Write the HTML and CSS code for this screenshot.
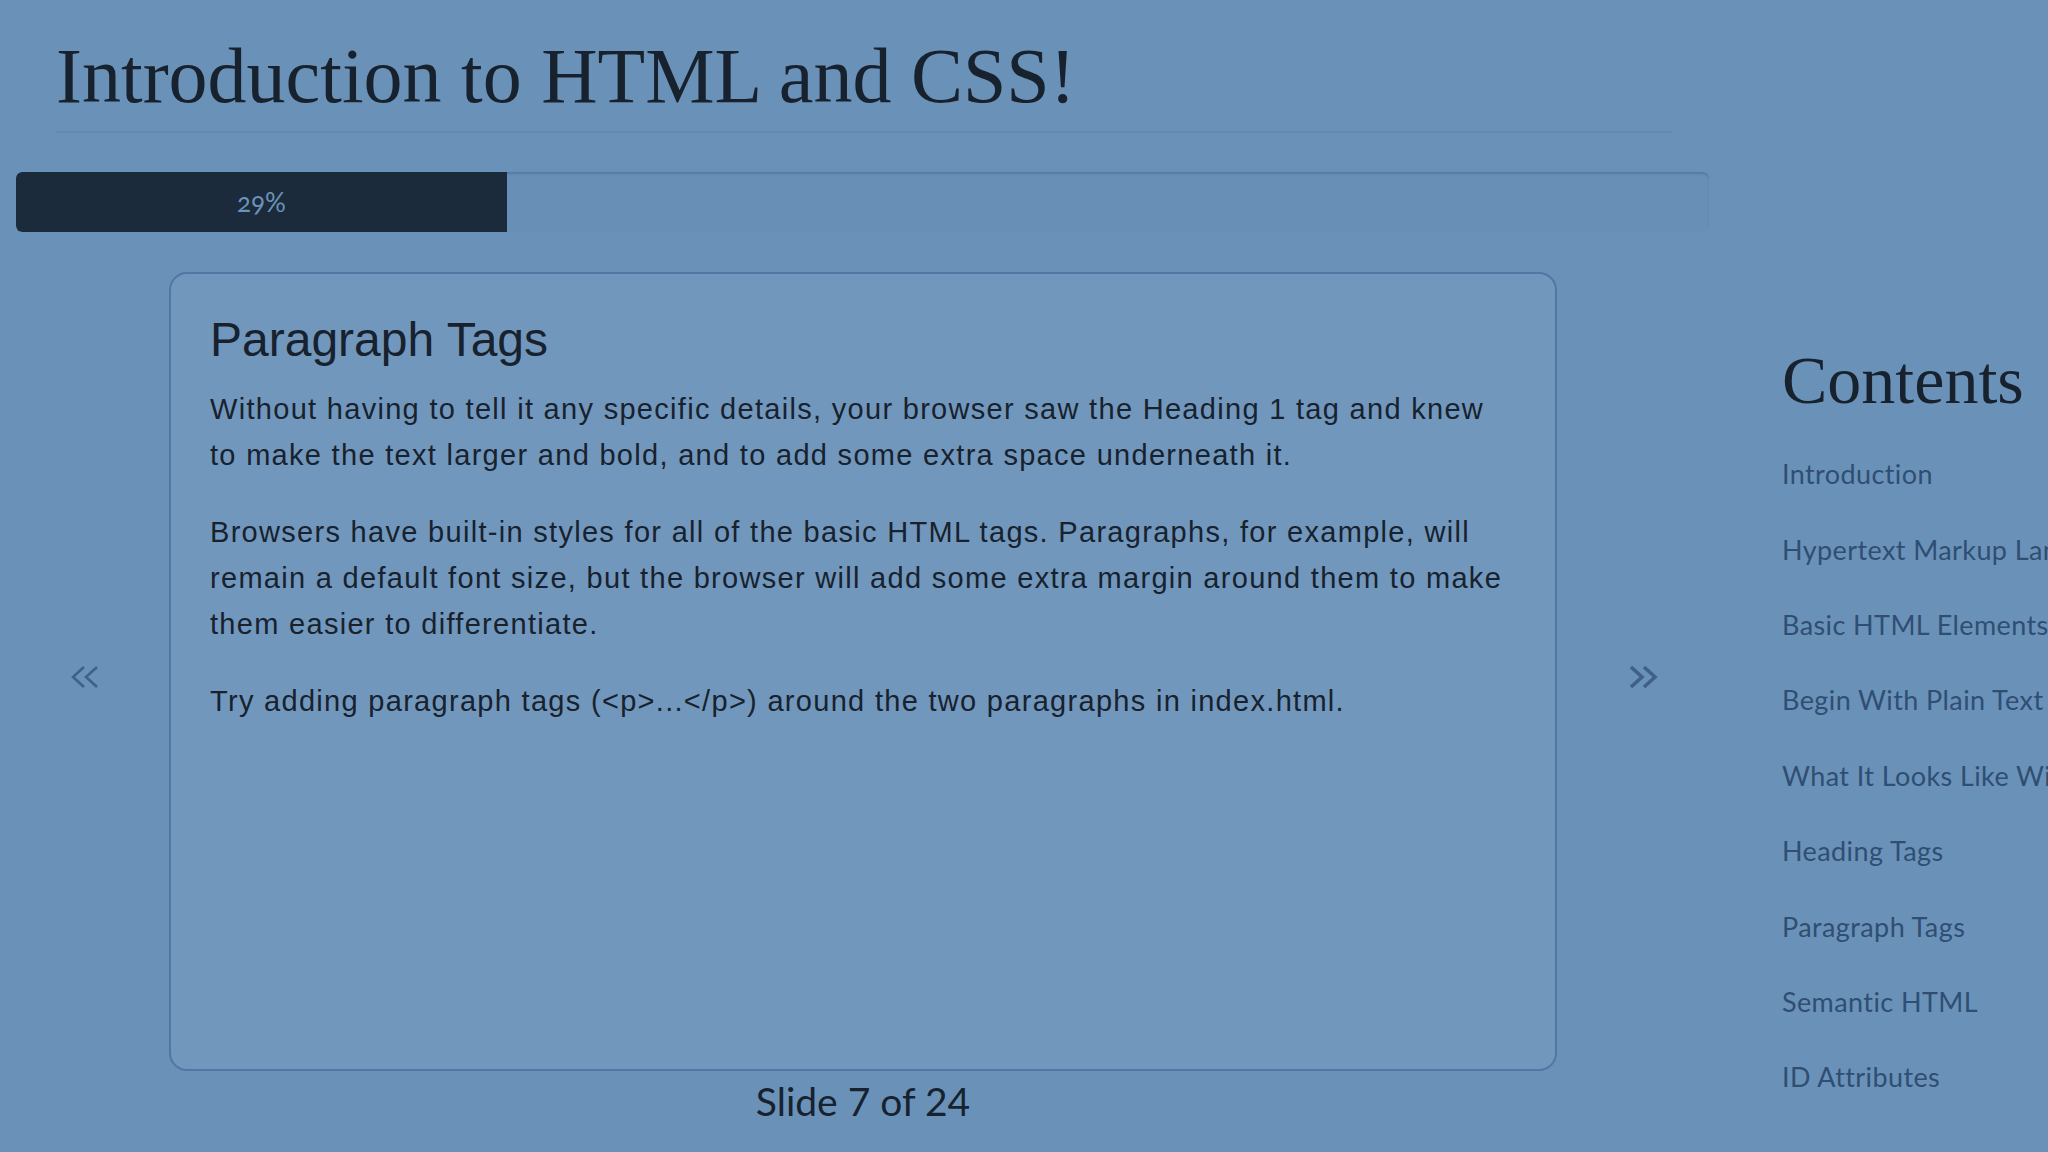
FILE: index.html
```html
<!DOCTYPE html>
<html lang="en">
<head>
<meta charset="utf-8">
<title>Introduction to HTML and CSS!</title>
<link rel="stylesheet" href="styles.css">
</head>
<body>
<div class="page">
  <main class="main">
    <header class="header">
      <h1 class="title">Introduction to HTML and CSS!</h1>
    </header>
    <div class="progress">
      <div class="progress-fill" style="width: 29%">29%</div>
    </div>
    <div class="stage">
      <div class="nav nav-left">
        <svg class="chev" viewBox="0 0 30 22" width="30" height="22"><polyline points="14,1 3,11 14,21" /><polyline points="27,1 16,11 27,21" /></svg>
      </div>
      <section class="card">
        <h2 class="card-title">Paragraph Tags</h2>
        <p class="card-text">Without having to tell it any specific details, your browser saw the Heading 1 tag and knew to make the text larger and bold, and to add some extra space underneath it.</p>
        <p class="card-text">Browsers have built-in styles for all of the basic HTML tags. Paragraphs, for example, will remain a default font size, but the browser will add some extra margin around them to make them easier to differentiate.</p>
        <p class="card-text">Try adding paragraph tags (&lt;p&gt;...&lt;/p&gt;) around the two paragraphs in index.html.</p>
      </section>
      <div class="nav nav-right">
        <svg class="chev chev-bold" viewBox="0 0 30 22" width="30" height="22"><polyline points="3,1 14,11 3,21" /><polyline points="16,1 27,11 16,21" /></svg>
      </div>
    </div>
    <div class="counter">Slide 7 of 24</div>
  </main>
  <aside class="sidebar">
    <h2 class="contents-title">Contents</h2>
    <ul class="toc">
      <li>Introduction</li>
      <li>Hypertext Markup Language</li>
      <li>Basic HTML Elements</li>
      <li>Begin With Plain Text</li>
      <li>What It Looks Like With Tags</li>
      <li>Heading Tags</li>
      <li>Paragraph Tags</li>
      <li>Semantic HTML</li>
      <li>ID Attributes</li>
    </ul>
  </aside>
</div>
</body>
</html>
```

FILE: styles.css
```css
html, body {
  margin: 0;
  padding: 0;
  background: #6a92b9;
  height: 100%;
  overflow: hidden;
}

.page {
  display: flex;
  flex-direction: row;
  width: 2048px;
  height: 1152px;
  overflow: hidden;
}

.main {
  flex: none;
  width: 1728px;
  display: flex;
  flex-direction: column;
}

.header {
  margin: 0 56px 0 56px;
  padding-top: 31px;
  padding-bottom: 10px;
  border-bottom: 2px solid #6389b1;
}

.title {
  margin: 0;
  font-family: "Liberation Serif", "DejaVu Serif", serif;
  font-weight: 400;
  font-size: 78px;
  line-height: 1.15;
  color: #17222e;
}

.progress {
  margin: 39px 19px 0 16px;
  height: 60px;
  border-radius: 6px;
  background: #6890b7;
  box-shadow: inset 0 2px 2px rgba(60, 100, 145, 0.45);
  overflow: hidden;
  display: flex;
}

.progress-fill {
  background: #1c2b3b;
  color: #6b93ba;
  font-family: Lato, "Open Sans", sans-serif;
  font-size: 26px;
  font-variant-numeric: oldstyle-nums;
  display: flex;
  align-items: center;
  justify-content: center;
  border-radius: 6px 0 0 6px;
}

.stage {
  margin-top: 40px;
  display: flex;
  flex-direction: row;
  align-items: stretch;
}

.nav {
  display: flex;
  align-items: center;
  justify-content: center;
  padding-top: 12px;
  box-sizing: border-box;
}

.nav-left {
  flex: none;
  width: 169px;
}

.nav-right {
  flex: 1;
}

.chev {
  fill: none;
  stroke: #3f6189;
  stroke-width: 2.6;
}

.chev-bold {
  stroke-width: 3.6;
}

.card {
  flex: none;
  width: 1388px;
  height: 799px;
  box-sizing: border-box;
  border: 2px solid #4f78a5;
  border-radius: 18px;
  background: #7297bc;
  padding: 37px 47px 38px 39px;
}

.card-title {
  margin: 0 0 18px 0;
  font-family: "Liberation Sans", Arial, sans-serif;
  font-weight: 400;
  font-size: 48px;
  line-height: 1.2;
  color: #17222e;
}

.card-text {
  margin: 0 0 31px 0;
  font-family: "Liberation Sans", Arial, sans-serif;
  font-size: 29px;
  letter-spacing: 1.3px;
  line-height: 46px;
  color: #17222e;
}

.counter {
  margin-top: 7px;
  margin-left: 169px;
  width: 1388px;
  text-align: center;
  font-family: Lato, "Open Sans", sans-serif;
  font-size: 39px;
  line-height: 1.2;
  color: #17222e;
}

.sidebar {
  flex: none;
  padding-left: 54px;
  padding-top: 341px;
  white-space: nowrap;
}

.contents-title {
  margin: 0 0 17px 0;
  font-family: "Liberation Serif", "DejaVu Serif", serif;
  font-weight: 400;
  font-size: 68px;
  line-height: 1.15;
  color: #17222e;
}

.toc {
  list-style: none;
  margin: 0;
  padding: 0;
}

.toc li {
  font-family: Lato, "Open Sans", sans-serif;
  font-size: 27px;
  letter-spacing: 0.4px;
  line-height: 75.4px;
  color: #2f4e72;
}
```
